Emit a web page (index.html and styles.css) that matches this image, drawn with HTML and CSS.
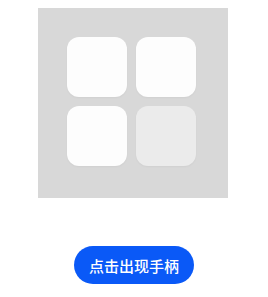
FILE: index.html
```html
<!DOCTYPE html>
<html lang="zh">
<head>
  <meta charset="UTF-8">
  <title>手柄</title>
  <link rel="stylesheet" href="styles.css">
</head>
<body>
  <div class="stage">
    <div class="pad">
      <div class="key"></div>
      <div class="key"></div>
      <div class="key"></div>
      <div class="key dim"></div>
    </div>
  </div>
  <div class="controls">
    <button class="show-btn">点击出现手柄</button>
  </div>
</body>
</html>
```

FILE: styles.css
```css
body {
  margin: 0;
  background: #fff;
  font-family: "Noto Sans CJK SC", "Noto Sans", sans-serif;
}
.stage {
  width: 190px;
  height: 190px;
  margin: 8px 0 0 38px;
  background: #d8d8d8;
  display: flex;
  align-items: center;
  justify-content: center;
}
.pad {
  display: grid;
  grid-template-columns: 60px 60px;
  grid-template-rows: 60px 60px;
  gap: 9px;
  margin: 0 3px 3px 0;
}
.key {
  background: #fdfdfd;
  border-radius: 12px;
  box-shadow: 0 1px 2px rgba(0, 0, 0, 0.04);
}
.key.dim {
  background: #ebebeb;
}
.controls {
  text-align: center;
  margin-top: 48px;
}
.show-btn {
  width: 120px;
  height: 38px;
  border: none;
  border-radius: 19px;
  background: #0a59f7;
  color: #fff;
  font-family: inherit;
  font-size: 15px;
  font-weight: 500;
  padding: 0;
}
```
